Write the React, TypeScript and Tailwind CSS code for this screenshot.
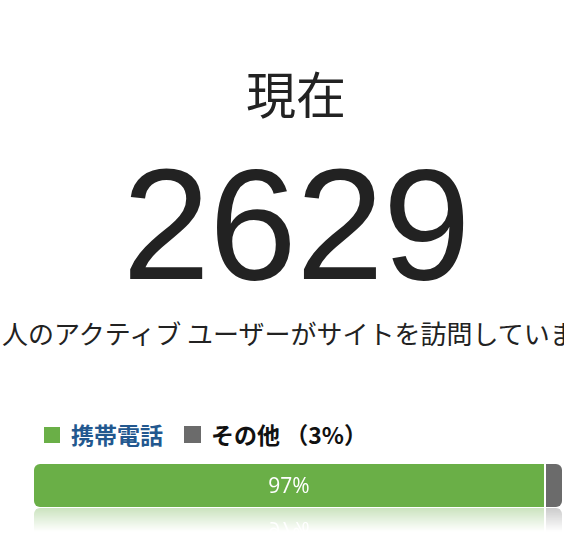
import React from "react";

// live active-user snapshot
const jp = { fontFamily: '"Noto Sans CJK JP", "Noto Sans", sans-serif' };
const num = { fontFamily: '"Liberation Sans", Arial, sans-serif' };

export default function App() {
  const mobile = 97;
  const other = 3;

  return (
    <div className="w-[564px] h-[542px] overflow-hidden bg-white text-[#222222]" style={jp}>
      {/* headline + count, centered a bit right of the window */}
      <div className="w-[592px] flex flex-col items-center">
        <div className="mt-[67px] text-[50px] leading-none">現在</div>
        <div className="mt-[28px] text-[158px] leading-none tracking-[-1px]" style={num}>
          2629
        </div>
      </div>

      <div className="mt-[17px] pl-[2px] text-[26px] leading-none whitespace-nowrap">
        人のアクティブ ユーザーがサイトを訪問しています
      </div>

      {/* legend */}
      <div className="mt-[77px] pl-[44px] flex items-center text-[23px] leading-none font-bold">
        <span className="w-[16px] h-[16px] bg-[#6aaf47]" />
        <span className="ml-[11px] text-[#23588f]">携帯電話</span>
        <span className="ml-[21px] w-[17px] h-[17px] bg-[#6b6b6b]" />
        <span className="ml-[10px] text-[#111111]">その他 （{other}%）</span>
      </div>

      {/* stacked bar with reflection */}
      <div className="mt-[18px] ml-[34px] mr-[2px] flex h-[43px] gap-[2px] [-webkit-box-reflect:below_1px_linear-gradient(transparent_45%,rgba(255,255,255,0.35))]">
        <div
          className="h-full bg-[#6aaf47] rounded-l-[6px] flex items-center justify-center text-white text-[21px]"
          style={{ width: 510, fontFamily: '"Open Sans", sans-serif' }}
        >
          {mobile}%
        </div>
        <div className="h-full flex-1 bg-[#6b6b6b] rounded-r-[6px]" />
      </div>
    </div>
  );
}
